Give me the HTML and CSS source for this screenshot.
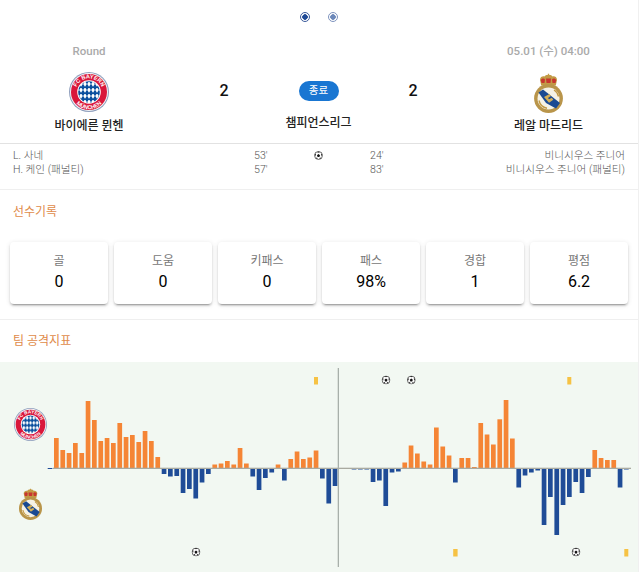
FILE: index.html
```html
<!DOCTYPE html>
<html lang="ko">
<head>
<meta charset="utf-8">
<title>바이에른 뮌헨 - 레알 마드리드</title>
<link rel="stylesheet" href="styles.css">
</head>
<body>
<svg class="defs" width="0" height="0" aria-hidden="true">
  <defs>
    <pattern id="lozenge" width="4" height="6" patternUnits="userSpaceOnUse" x="0" y="0">
      <rect width="4" height="6" fill="#fff"/>
      <path d="M2 -.3L4.200 3L2 6.300L-.2 3Z" fill="#0a4f9e"/>
    </pattern>
    <path id="arcTop" d="M6.4 20a13.6 13.6 0 0 1 27.2 0"/>
    <path id="arcBottom" d="M2.800 20a17.200 17.200 0 0 0 34.400 0"/>
    <symbol id="bayern" viewBox="0 0 40 40">
      <circle cx="20" cy="20" r="20" fill="#8f9fbd"/>
      <circle cx="20" cy="20" r="19" fill="#f4f4f6"/>
      <circle cx="20" cy="20" r="18" fill="#d9173b"/>
      <circle cx="20" cy="20" r="11.8" fill="#fff"/>
      <circle cx="20" cy="20" r="10.800" fill="url(#lozenge)"/>
      <text class="crest-text"><textPath href="#arcTop" startOffset="50%">FC BAYERN</textPath></text>
      <text class="crest-text"><textPath href="#arcBottom" startOffset="50%">MÜNCHEN</textPath></text>
    </symbol>
    <symbol id="madrid" viewBox="0 0 29 40">
      <path d="M6 7C6 3.500 9 3 10.500 3.500C11.500 2 13 1.800 13.800 2V.8h1.400V2c.8-.2 2.300 0 3.300 1.500C20 3 23 3.500 23 7L21.800 12.500H7.200Z" fill="#c39a45"/>
      <path d="M6.800 7C8 5 10 5 11 6.500L10.500 10H7.500ZM12 5.500h5L16.500 10h-4ZM18 6.500C19 5 21 5 22.200 7L21.500 10H18.500Z" fill="#c8362f"/>
      <circle cx="14.500" cy="25.500" r="14.400" fill="#b9954a"/>
      <circle cx="14.500" cy="25.500" r="11" fill="#f5f2e6"/>
      <path d="M4.500 19.500L9 16.500L26 30L22 35.500L12 30Z" fill="#1a4a92"/>
      <path d="M10 24l5.500-3 1.500 2-3 2 1 1.200 2.800-1.500 1.500 2-4.300 3Z" fill="#d2ae58"/>
      <path d="M5 27.500a9.800 9.800 0 0 0 8 7.700M20 17a9.800 9.800 0 0 1 4.500 6.500" fill="none" stroke="#c39a45" stroke-width="1.400"/>
    </symbol>
    <symbol id="ball" viewBox="0 0 10 10">
      <circle cx="5" cy="5" r="4.400" fill="#fff" stroke="#333" stroke-width="0.800"/>
      <path d="M5 3.300L6.700 4.600 6 6.600H4L3.300 4.600Z" fill="#111"/>
      <path d="M3.400 1L5 1.900 6.600 1 5 .5ZM.7 4L1.900 5.700 2.200 3ZM9.300 4L8.100 5.700 7.800 3ZM2.300 8.500L4.200 8.300 3 6.900ZM7.700 8.500L5.800 8.300 7 6.900Z" fill="#222"/>
    </symbol>
  </defs>
</svg>

<main class="page">
  <nav class="pager" aria-label="페이지">
    <span class="dot"></span>
    <span class="dot dot-dim"></span>
  </nav>

  <header class="match">
    <section class="team">
      <p class="meta">Round</p>
      <svg class="crest crest-bayern"><use href="#bayern"/></svg>
      <p class="team-name">바이에른 뮌헨</p>
    </section>
    <section class="center">
      <div class="scoreline">
        <span class="score">2</span>
        <span class="badge">종료</span>
        <span class="score">2</span>
      </div>
      <p class="league">챔피언스리그</p>
    </section>
    <section class="team">
      <p class="meta">05.01 (수) 04:00</p>
      <svg class="crest crest-madrid"><use href="#madrid"/></svg>
      <p class="team-name team-name-madrid">레알 마드리드</p>
    </section>
  </header>

  <section class="goals">
    <span>L. 사네</span>
    <span>53'</span>
    <svg class="goal-icon"><use href="#ball"/></svg>
    <span>24'</span>
    <span class="right">비니시우스 주니어</span>
    <span>H. 케인 (패널티)</span>
    <span>57'</span>
    <span></span>
    <span>83'</span>
    <span class="right">비니시우스 주니어 (패널티)</span>
  </section>

  <section class="player">
    <h2 class="section-title">선수기록</h2>
    <div class="cards">
      <div class="card"><span class="card-label">골</span><strong class="card-value">0</strong></div>
      <div class="card"><span class="card-label">도움</span><strong class="card-value">0</strong></div>
      <div class="card"><span class="card-label">키패스</span><strong class="card-value">0</strong></div>
      <div class="card"><span class="card-label">패스</span><strong class="card-value">98%</strong></div>
      <div class="card"><span class="card-label">경합</span><strong class="card-value">1</strong></div>
      <div class="card"><span class="card-label">평점</span><strong class="card-value">6.2</strong></div>
    </div>
  </section>

  <section class="attack">
    <h2 class="section-title">팀 공격지표</h2>
    <svg class="chart" viewBox="0 362 638 210" role="img" aria-label="팀 공격지표 차트">
      <use href="#bayern" x="14" y="408" width="33" height="33"/>
      <use href="#madrid" x="18.500" y="488" width="24" height="32"/>
      <g transform="translate(0 468)">
        <g class="up">
          <rect x="54.0" y="-30" height="30"/><rect x="60.4" y="-18" height="18"/><rect x="66.7" y="-15" height="15"/><rect x="73.0" y="-25" height="25"/><rect x="79.4" y="-15" height="15"/><rect x="85.7" y="-67" height="67"/><rect x="92.0" y="-48" height="48"/><rect x="98.4" y="-27" height="27"/><rect x="104.7" y="-30" height="30"/><rect x="111.0" y="-25" height="25"/><rect x="117.4" y="-45" height="45"/><rect x="123.7" y="-31" height="31"/><rect x="130.0" y="-33" height="33"/><rect x="136.4" y="-26" height="26"/><rect x="142.7" y="-37" height="37"/><rect x="149.0" y="-27" height="27"/><rect x="155.4" y="-11" height="11"/>
          <rect x="212.4" y="-3.5" height="3.5"/><rect x="218.7" y="-4.5" height="4.5"/><rect x="225.0" y="-7" height="7"/><rect x="231.4" y="-3.5" height="3.5"/><rect x="237.7" y="-20" height="20"/><rect x="244.0" y="-4.5" height="4.5"/>
          <rect x="275.7" y="-3.5" height="3.5"/>
          <rect x="288.4" y="-9" height="9"/><rect x="294.7" y="-16.5" height="16.5"/><rect x="301.0" y="-9" height="9"/><rect x="307.4" y="-10.5" height="10.5"/><rect x="313.7" y="-17.5" height="17.5"/>
          <rect x="402.4" y="-5.5" height="5.5"/><rect x="408.7" y="-22.5" height="22.5"/><rect x="415.0" y="-14.5" height="14.5"/><rect x="421.4" y="-6.5" height="6.5"/><rect x="427.7" y="-3.5" height="3.5"/><rect x="434.0" y="-40.5" height="40.5"/><rect x="440.4" y="-21.5" height="21.5"/><rect x="446.7" y="-12.5" height="12.5"/>
          <rect x="459.4" y="-10" height="10"/><rect x="465.7" y="-10" height="10"/><rect x="472.0" y="-1" height="1"/><rect x="478.4" y="-45" height="45"/><rect x="484.7" y="-33.500" height="33.500"/><rect x="491.0" y="-23.500" height="23.500"/><rect x="497.4" y="-48.700" height="48.700"/><rect x="503.7" y="-68" height="68"/><rect x="510.0" y="-29.500" height="29.500"/>
          <rect x="592.4" y="-18" height="18"/><rect x="598.7" y="-10" height="10"/><rect x="605.0" y="-8" height="8"/><rect x="611.4" y="-8" height="8"/>
        </g>
        <g class="down">
          <rect x="47.7" y="0" height="1"/>
          <rect x="161.7" y="0" height="6"/><rect x="168.0" y="0" height="8.500"/><rect x="174.4" y="0" height="8"/><rect x="180.7" y="0" height="25"/><rect x="187.0" y="0" height="21"/><rect x="193.4" y="0" height="30.500"/><rect x="199.7" y="0" height="14.500"/><rect x="206.0" y="0" height="6"/>
          <rect x="250.4" y="0" height="8.500"/><rect x="256.7" y="0" height="22"/><rect x="263.0" y="0" height="10"/><rect x="269.4" y="0" height="4.500"/>
          <rect x="282.0" y="0" height="12.500"/>
          <rect x="320.0" y="0" height="10.500"/><rect x="326.4" y="0" height="35.500"/><rect x="332.7" y="0" height="18"/>
          <rect x="339.0" y="0" height="1"/><rect x="345.4" y="0" height="1"/><rect x="351.7" y="0" height="1.500"/><rect x="358.0" y="0" height="1.500"/><rect x="364.4" y="0" height="1.500"/><rect x="370.7" y="0" height="14"/><rect x="377.0" y="0" height="12.500"/><rect x="383.4" y="0" height="38"/><rect x="389.7" y="0" height="4.500"/><rect x="396.0" y="0" height="3.500"/>
          <rect x="453.0" y="0" height="14.500"/>
          <rect x="516.4" y="0" height="19.500"/><rect x="522.7" y="0" height="7.500"/><rect x="529.0" y="0" height="4.500"/><rect x="535.4" y="0" height="2.500"/><rect x="541.7" y="0" height="57"/><rect x="548.0" y="0" height="29"/><rect x="554.4" y="0" height="67"/><rect x="560.7" y="0" height="37"/><rect x="567.0" y="0" height="29"/><rect x="573.4" y="0" height="14"/><rect x="579.7" y="0" height="25"/><rect x="586.0" y="0" height="9"/>
          <rect x="617.7" y="0" height="19.500"/><rect x="624.0" y="0" height="1.500"/>
        </g>
        <rect class="baseline" x="53" y="-0.3" width="578" height="1.300"/>
      </g>
      <rect class="divider" x="337.7" y="368" width="1.300" height="199"/>
      <g class="cards-y">
        <rect x="314" y="377" width="4" height="7.500"/>
        <rect x="567.300" y="377" width="4" height="7.500"/>
        <rect x="453.200" y="549" width="4.400" height="7.500"/>
        <rect x="624.300" y="549" width="4" height="7.500"/>
      </g>
      <use href="#ball" x="381.500" y="375.500" width="9" height="9"/>
      <use href="#ball" x="406.800" y="375.500" width="9" height="9"/>
      <use href="#ball" x="191.500" y="547.500" width="9" height="9"/>
      <use href="#ball" x="571.500" y="547.500" width="9" height="9"/>
    </svg>
  </section>
</main>
</body>
</html>
```

FILE: styles.css
```css
* {
  box-sizing: border-box;
}

html,
body {
  margin: 0;
  padding: 0;
  height: 572px;
  overflow: hidden;
  background: #fff;
}

body {
  font-family: Roboto, "Noto Sans CJK KR", sans-serif;
  color: #111;
}

p,
h2 {
  margin: 0;
}

.defs {
  position: absolute;
}

.crest-text {
  font-family: "Liberation Sans", sans-serif;
  font-size: 5.6px;
  font-weight: 700;
  fill: #fff;
  text-anchor: middle;
}

.page {
  width: 639px;
  height: 572px;
  border-right: 1px solid #f0f0f0;
}

.pager {
  height: 34px;
  display: flex;
  justify-content: center;
  align-items: center;
  gap: 18px;
  padding-right: 1px;
}

.dot {
  width: 10px;
  height: 10px;
  border: 1.5px solid #3a5a9c;
  border-radius: 50%;
  background: radial-gradient(circle, #1f4a96 0 2.5px, #fff 3px);
}

.dot-dim {
  opacity: 0.65;
}

.match {
  height: 110px;
  display: grid;
  grid-template-columns: 178px 1fr 179px;
  border-bottom: 1px solid #e2e2e2;
}

.team {
  display: flex;
  flex-direction: column;
  align-items: center;
  padding-top: 10px;
}

.meta {
  height: 14px;
  font-size: 11.5px;
  line-height: 14px;
  font-weight: 500;
  color: #aaa;
}

.crest {
  display: block;
}

.crest-bayern {
  width: 40px;
  height: 40px;
  margin-top: 14px;
}

.crest-madrid {
  width: 29px;
  height: 40px;
  margin-top: 15px;
}

.team-name {
  margin-top: 7px;
  font-size: 12px;
  line-height: 14px;
  font-weight: 500;
  color: #222;
}

.team-name-madrid {
  margin-top: 6px;
}

.center {
  display: flex;
  flex-direction: column;
  align-items: center;
  padding-top: 47px;
}

.scoreline {
  width: 201px;
  display: flex;
  justify-content: space-between;
  align-items: center;
  height: 20px;
}

.score {
  font-size: 16px;
  font-weight: 500;
  line-height: 22px;
  width: 12px;
  text-align: center;
}

.badge {
  width: 40px;
  height: 20px;
  border-radius: 10px;
  background: #1976d2;
  color: #fff;
  font-size: 10.5px;
  line-height: 20px;
  text-align: center;
}

.league {
  margin-top: 15px;
  font-size: 12px;
  line-height: 14px;
  font-weight: 500;
  color: #222;
}

.goals {
  height: 46px;
  display: grid;
  grid-template-columns: 241px 60px 10px 46px 30px 1fr;
  grid-auto-rows: 14px;
  align-content: start;
  padding: 5px 13px 0;
  font-size: 10.6px;
  line-height: 14px;
  font-weight: 300;
  color: #555;
  border-bottom: 1px solid #efefef;
}

.goals > span:nth-child(4),
.goals > span:nth-child(9) {
  grid-column: 5;
}

.goal-icon {
  width: 9px;
  height: 9px;
  margin-top: 2px;
}

.right {
  text-align: right;
}

.section-title {
  font-size: 12px;
  line-height: 14px;
  font-weight: 400;
  color: #e08b4a;
}

.player {
  height: 130px;
  padding: 15px 10px 0;
  border-bottom: 1px solid #efefef;
}

.player .section-title {
  padding-left: 3px;
}

.cards {
  display: grid;
  grid-template-columns: repeat(6, 1fr);
  gap: 6px;
  margin-top: 23px;
}

.card {
  height: 62px;
  display: flex;
  flex-direction: column;
  align-items: center;
  padding-top: 12px;
  border-radius: 4px;
  background: #fff;
  box-shadow: 0 3px 1px -2px rgba(0, 0, 0, 0.2), 0 2px 2px 0 rgba(0, 0, 0, 0.14), 0 1px 5px 0 rgba(0, 0, 0, 0.12);
}

.card-label {
  font-size: 12px;
  line-height: 14px;
  color: #777;
}

.card-value {
  margin-top: 4px;
  font-size: 16px;
  line-height: 20px;
  font-weight: 400;
  color: #000;
}

.attack .section-title {
  padding: 14px 0 0 13px;
  height: 42px;
}

.chart {
  display: block;
  width: 638px;
  height: 210px;
  background: #f2f8f2;
}

.up rect {
  width: 4.7px;
  fill: #f58535;
}

.down rect {
  width: 4.7px;
  fill: #1f4c97;
}

.baseline {
  fill: #a9aaa0;
}

.divider {
  fill: #a8b0aa;
}

.cards-y rect {
  fill: #f6c244;
}
```
